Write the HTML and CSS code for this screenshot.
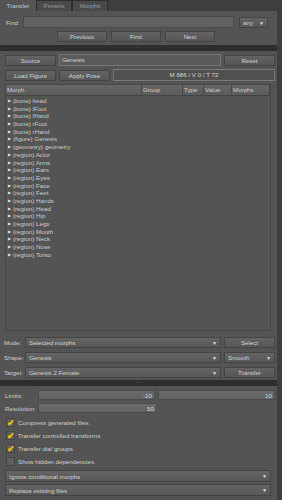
FILE: index.html
```html
<!DOCTYPE html>
<html lang="en">
<head>
  <meta charset="UTF-8" />
  <title>Transfer</title>
  <link rel="stylesheet" href="styles.css">
</head>
<body>
  <div class="pane">
    <!-- Tabs -->
    <div class="tabs">
      <div class="tab active">Transfer</div>
      <div class="tab">Presets</div>
      <div class="tab">Morphs</div>
    </div>

    <div class="page">
      <div class="top">
        <div class="row find-row">
          <span class="label">Find</span>
          <div class="field grow"></div>
          <div class="combo small">any<span class="arrow">&#9660;</span></div>
        </div>
        <div class="row nav-row">
          <div class="btn nav">Previous</div>
          <div class="btn nav">First</div>
          <div class="btn nav">Next</div>
        </div>
      </div>

      <div class="splitter"><span class="grip">&middot;&middot;&middot;</span></div>

      <div class="middle">
        <div class="row">
          <div class="btn side">Source</div>
          <div class="field grow text">Genesis</div>
          <div class="btn side">Reset</div>
        </div>
        <div class="row">
          <div class="btn side">Load Figure</div>
          <div class="btn side">Apply Pose</div>
          <div class="field grow center">M 686 / V 0 / T 72</div>
        </div>

        <div class="table">
          <div class="thead">
            <div class="th c-morph">Morph</div>
            <div class="th c-group">Group</div>
            <div class="th c-type">Type</div>
            <div class="th c-value">Value</div>
            <div class="th c-morphs">Morphs</div>
          </div>
          <div class="tbody" id="tree"></div>
        </div>

        <div class="row opt">
          <span class="label lbl">Mode:</span>
          <div class="combo grow">Selected morphs<span class="arrow">&#9660;</span></div>
          <div class="btn side">Select</div>
        </div>
        <div class="row opt">
          <span class="label lbl">Shape:</span>
          <div class="combo grow">Genesis<span class="arrow">&#9660;</span></div>
          <div class="combo side">Smooth<span class="arrow">&#9660;</span></div>
        </div>
        <div class="row opt">
          <span class="label lbl">Target:</span>
          <div class="combo grow">Genesis 2 Female<span class="arrow">&#9660;</span></div>
          <div class="btn side">Transfer</div>
        </div>
      </div>

      <div class="splitter"><span class="grip">&middot;&middot;&middot;</span></div>

      <div class="bottom">
        <div class="row num-row">
          <span class="label lbl2">Limits:</span>
          <div class="slider">-10</div>
          <div class="slider">10</div>
        </div>
        <div class="row num-row">
          <span class="label lbl2">Resolution:</span>
          <div class="slider">50</div>
          <div class="spacer"></div>
        </div>

        <div class="check on"><span class="box">&#10004;</span>Compress generated files</div>
        <div class="check on"><span class="box">&#10004;</span>Transfer controlled transforms</div>
        <div class="check on"><span class="box">&#10004;</span>Transfer dial groups</div>
        <div class="check"><span class="box"></span>Show hidden dependencies</div>

        <div class="combo wide">Ignore conditional morphs<span class="arrow">&#9660;</span></div>
        <div class="combo wide">Replace existing files<span class="arrow">&#9660;</span></div>
      </div>
    </div>
  </div>

  <script>
    const items = [
      '(bone) head', '(bone) lFoot', '(bone) lHand', '(bone) rFoot', '(bone) rHand',
      '(figure) Genesis', '(geometry) geometry', '(region) Actor', '(region) Arms',
      '(region) Ears', '(region) Eyes', '(region) Face', '(region) Feet',
      '(region) Hands', '(region) Head', '(region) Hip', '(region) Legs',
      '(region) Mouth', '(region) Neck', '(region) Nose', '(region) Torso'
    ];
    const tree = document.getElementById('tree');
    items.forEach(name => {
      const row = document.createElement('div');
      row.className = 'node';
      row.innerHTML = '<span class="tri">&#9654;</span>' + name;
      tree.appendChild(row);
    });
  </script>
</body>
</html>
```

FILE: styles.css
```css
* {
  box-sizing: border-box;
}

body {
  margin: 0;
  background: #3b3b3b;
  font-family: "Liberation Sans", Arial, sans-serif;
  font-size: 6.2px;
  color: #d4d4d4;
}

.pane {
  width: 282px;
  height: 500px;
  display: flex;
  flex-direction: column;
  border-right: 5px solid #3e3e3e;
}

.tabs {
  height: 11px;
  display: flex;
  background: #3e3e3e;
}

.tab {
  width: 36px;
  line-height: 10px;
  text-align: center;
  color: #9a9a9a;
  background: #4a4a4a;
  border: 1px solid #2e2e2e;
  border-bottom: none;
}

.tab.active {
  background: #545454;
  color: #c8c8c8;
  border-color: #545454;
}

.page {
  flex: 1;
  background: #545454;
  display: flex;
  flex-direction: column;
  padding: 0 2px 0 5px;
}

.row {
  display: flex;
  align-items: center;
  gap: 3px;
}

.label {
  color: #cfcfcf;
  white-space: nowrap;
  flex-shrink: 0;
}

.top {
  padding-top: 5px;
  padding-bottom: 3px;
}

.find-row {
  height: 12px;
  margin-left: 1px;
  gap: 5px;
}

.field {
  height: 12px;
  background: #616161;
  border: 1px solid #4a4a4a;
  line-height: 10px;
  color: #d8d8d8;
}

.field.text {
  background: #5a5a5a;
  border: 1px solid #777;
  padding-left: 2px;
}

.field.center {
  text-align: center;
  border: 1px solid #7a7a7a;
  background: #505050;
}

.grow {
  flex: 1;
  min-width: 0;
}

.combo {
  height: 11px;
  line-height: 10px;
  background: linear-gradient(#646464, #575757);
  border: 1px solid #444;
  padding-left: 3px;
  position: relative;
  color: #d4d4d4;
  white-space: nowrap;
}

.combo .arrow {
  position: absolute;
  right: 3px;
  top: 0;
  font-size: 5px;
  color: #e0e0e0;
}

.combo.small {
  width: 29px;
  margin-right: 7px;
  flex-shrink: 0;
}

.nav-row {
  justify-content: center;
  gap: 4px;
  margin-top: 3px;
  height: 11px;
  padding-right: 8px;
}

.btn {
  height: 11px;
  line-height: 10px;
  text-align: center;
  background: linear-gradient(#636363, #565656);
  border: 1px solid #444;
  color: #d4d4d4;
  white-space: nowrap;
}

.btn.nav {
  width: 50px;
}

.side {
  width: 51px;
  flex-shrink: 0;
}

.combo.side {
  text-align: left;
}

.splitter {
  height: 6px;
  background: #2e2e2e;
  margin: 0 -2px 0 -5px;
  text-align: center;
  line-height: 4px;
  font-size: 6px;
  color: #777;
}

.middle {
  flex: 1;
  display: flex;
  flex-direction: column;
  gap: 3px;
  padding-top: 3px;
  padding-bottom: 2px;
}

.middle > .row {
  height: 12px;
}

.table {
  flex: 1;
  display: flex;
  flex-direction: column;
  background: #545454;
  border: 1px solid #474747;
  margin-right: 4px;
  margin-bottom: 2px;
}

.thead {
  height: 11px;
  display: flex;
  background: linear-gradient(#666, #5b5b5b);
  border-bottom: 1px solid #444;
}

.th {
  line-height: 10px;
  padding-left: 1px;
  border-right: 1px solid #474747;
  color: #cfcfcf;
}

.c-morph { width: 136px; }
.c-group { width: 41px; }
.c-type { width: 21px; }
.c-value { width: 28px; }
.c-morphs { flex: 1; }

.tbody {
  flex: 1;
  padding-top: 1px;
  padding-left: 2px;
}

.node {
  height: 7.7px;
  line-height: 7.7px;
  color: #cdcdcd;
  white-space: nowrap;
}

.tri {
  font-size: 4px;
  display: inline-block;
  width: 5px;
  vertical-align: 1px;
  color: #e6e6e6;
}

.opt {
  margin-left: -1px;
  gap: 2px;
}

.opt .side {
  margin-left: 1px;
}

.lbl {
  width: 19px;
}

.bottom {
  padding-top: 4px;
  padding-bottom: 4px;
  display: flex;
  flex-direction: column;
}

.num-row {
  height: 10px;
  margin-bottom: 3px;
}

.lbl2 {
  width: 30px;
}

.slider {
  flex: 1;
  height: 10px;
  line-height: 10px;
  text-align: right;
  padding-right: 2px;
  background: linear-gradient(#6b6b6b, #626262);
  border: 1px solid #4c4c4c;
  color: #dcdcdc;
}

.spacer {
  flex: 1;
}

.check {
  height: 13px;
  display: flex;
  align-items: center;
  padding-left: 1px;
  color: #d0d0d0;
}

.box {
  width: 9px;
  height: 9px;
  background: #5e5e5e;
  border: 1px solid #444;
  margin-right: 3px;
  color: #f2c200;
  font-size: 9px;
  line-height: 8px;
  text-align: center;
  font-weight: bold;
}

.combo.wide {
  height: 12px;
  line-height: 11px;
  margin-top: 2px;
  margin-right: 4px;
}
```
